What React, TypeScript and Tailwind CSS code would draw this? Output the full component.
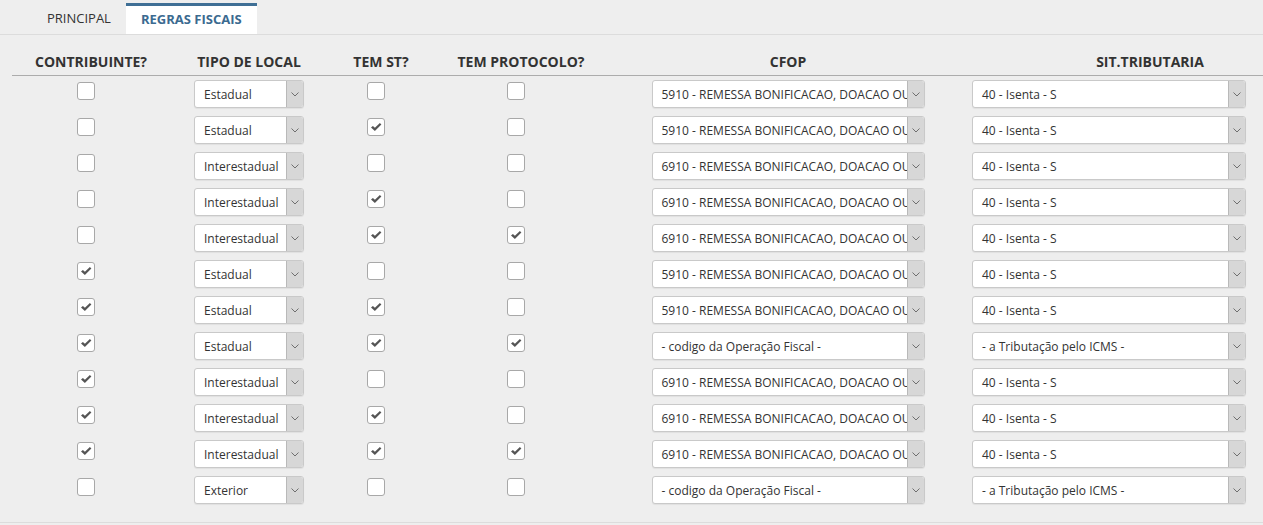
const rows = [
  { c: false, tipo: 'Estadual', st: false, p: false, cfop: '5910', sit: '40' },
  { c: false, tipo: 'Estadual', st: true, p: false, cfop: '5910', sit: '40' },
  { c: false, tipo: 'Interestadual', st: false, p: false, cfop: '6910', sit: '40' },
  { c: false, tipo: 'Interestadual', st: true, p: false, cfop: '6910', sit: '40' },
  { c: false, tipo: 'Interestadual', st: true, p: true, cfop: '6910', sit: '40' },
  { c: true, tipo: 'Estadual', st: false, p: false, cfop: '5910', sit: '40' },
  { c: true, tipo: 'Estadual', st: true, p: false, cfop: '5910', sit: '40' },
  { c: true, tipo: 'Estadual', st: true, p: true, cfop: '', sit: '' },
  { c: true, tipo: 'Interestadual', st: false, p: false, cfop: '6910', sit: '40' },
  { c: true, tipo: 'Interestadual', st: true, p: false, cfop: '6910', sit: '40' },
  { c: true, tipo: 'Interestadual', st: true, p: true, cfop: '6910', sit: '40' },
  { c: false, tipo: 'Exterior', st: false, p: false, cfop: '', sit: '' },
];

const cfopText = (code: string) =>
  code ? `${code} - REMESSA BONIFICACAO, DOACAO OU BRINDE` : '- codigo da Operação Fiscal -';
const sitText = (code: string) => (code ? '40 - Isenta - S' : '- a Tributação pelo ICMS -');

const Checkbox = ({ checked }: { checked: boolean }) => (
  <div className="w-[18px] h-[18px] rounded-[3px] border border-[#a8a8a8] bg-white flex items-center justify-center">
    {checked && (
      <svg width="12" height="12" viewBox="0 0 12 12">
        <path d="M1 6.6 L2.9 4.9 L4.9 6.8 L9.9 2 L11.4 3.6 L4.9 9.9 Z" fill="#555" />
      </svg>
    )}
  </div>
);

const Select = ({ value, width }: { value: string; width: string }) => (
  <div className={`${width} h-[28px] flex border border-[#c9c9c9] rounded-[3px] bg-white overflow-hidden shadow-[0_1px_1px_rgba(0,0,0,0.06)]`}>
    <div className="flex-1 min-w-0 pl-[9px] pr-[2px] pt-[1px] text-[12px] leading-[26px] text-[#333] whitespace-nowrap overflow-hidden">
      {value}
    </div>
    <div className="w-[17px] shrink-0 bg-[#d7d7d7] border-l border-[#b9b9b9] flex items-center justify-center">
      <svg width="8" height="5" viewBox="0 0 8 5">
        <path d="M0.5 0.5 L4 4 L7.5 0.5" fill="none" stroke="#6f6f6f" strokeWidth="1" />
      </svg>
    </div>
  </div>
);

const cols = 'grid grid-cols-[158px_158px_106px_174px_360px_364px]';

export default function App() {
  return (
    <div className="w-full h-[525px] bg-[#eeeeee] overflow-hidden text-[#333]" style={{ fontFamily: '"Open Sans", sans-serif' }}>
      <div className="h-[35px] border-b border-[#dcdcdc] pl-[32px] flex items-end">
        <div className="h-[31px] px-[15px] flex items-center text-[13px]">PRINCIPAL</div>
        <div className="h-[31px] px-[15px] flex items-center text-[13px] font-bold bg-white border-t-[3px] border-[#3f6f95] text-[#3b6a90]">
          REGRAS FISCAIS
        </div>
      </div>

      <div className="pb-[14px] border-b border-[#dcdcdc]">
        <div className="ml-[12px] w-[1320px]">
          <div className={`${cols} h-[41px] border-b border-[#acacac] text-[14px] font-bold leading-[19px] text-[#333]`}>
            {['CONTRIBUINTE?', 'TIPO DE LOCAL', 'TEM ST?', 'TEM PROTOCOLO?', 'CFOP', 'SIT.TRIBUTARIA'].map((h) => (
              <div key={h} className="flex items-end justify-center pb-[4px]">
                {h}
              </div>
            ))}
          </div>
          {rows.map((r, i) => (
            <div key={i} className={`${cols} h-[36px]`}>
              <div className="flex justify-center items-start pt-[6px] pr-[10px]">
                <Checkbox checked={r.c} />
              </div>
              <div className="flex justify-center items-center">
                <Select value={r.tipo} width="w-[110px]" />
              </div>
              <div className="flex justify-center items-start pt-[6px] pr-[10px]">
                <Checkbox checked={r.st} />
              </div>
              <div className="flex justify-center items-start pt-[6px] pr-[10px]">
                <Checkbox checked={r.p} />
              </div>
              <div className="flex justify-center items-center">
                <Select value={cfopText(r.cfop)} width="w-[273px]" />
              </div>
              <div className="flex justify-start items-center pl-[4px]">
                <Select value={sitText(r.sit)} width="w-[274px]" />
              </div>
            </div>
          ))}
        </div>
      </div>
    </div>
  );
}
